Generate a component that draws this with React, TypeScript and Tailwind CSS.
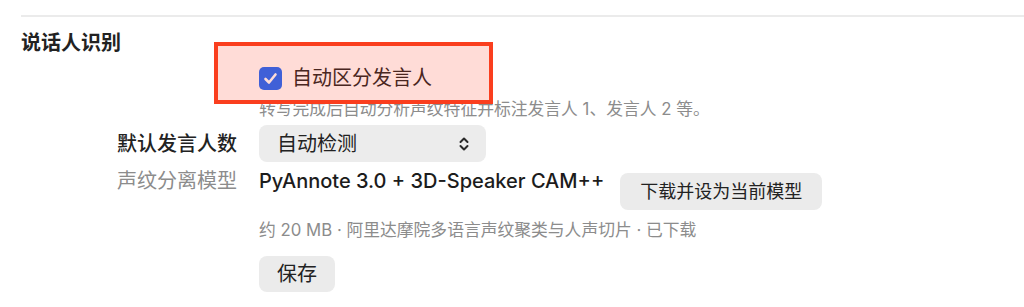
import React from 'react';

const font = { fontFamily: 'Inter, "Noto Sans CJK SC", sans-serif' };

const UpDown = () => (
  <svg width="12" height="16" viewBox="0 0 12 16" fill="none" stroke="#2a2a2a" strokeWidth="2" strokeLinecap="round" strokeLinejoin="round">
    <path d="M2.5 6 L6 2.5 L9.5 6" />
    <path d="M2.5 10 L6 13.5 L9.5 10" />
  </svg>
);

const Checkbox = () => (
  <svg width="23" height="23" viewBox="0 0 23 23">
    <rect x="0" y="0" width="23" height="23" rx="5" fill="#1668ff" />
    <path d="M6.5 12 L10 15.5 L16.5 7.5" fill="none" stroke="#fff" strokeWidth="2.6" strokeLinecap="round" strokeLinejoin="round" />
  </svg>
);

const Row = ({ label, gray, children, className = '' }: { label?: string; gray?: boolean; children: React.ReactNode; className?: string }) => (
  <div className={`flex ${className}`}>
    <div className={`w-[216px] shrink-0 text-right text-[20px] leading-[24px] ${gray ? 'text-[#8c8c8c]' : 'font-medium text-[#222]'}`}>
      {label}
    </div>
    <div className="ml-[22px] flex-1">{children}</div>
  </div>
);

const App = () => {
  return (
    <div className="relative w-[1024px] h-[307px] overflow-hidden bg-white pl-[21px]" style={font}>
      <div className="pt-[15px]">
        <div className="h-[2px] bg-[#ebebeb]" />
      </div>

      <h2 className="mt-[14px] text-[20px] leading-[24px] font-semibold text-[#222]">说话人识别</h2>

      <Row className="mt-[11px]">
        <div className="flex items-center gap-[10px] h-[24px]">
          <Checkbox />
          <span className="text-[20px] leading-[24px] text-[#222]">自动区分发言人</span>
        </div>
      </Row>

      <Row className="mt-[8px]">
        <p className="text-[16.8px] leading-[22px] text-[#8c8c8c]">转写完成后自动分析声纹特征并标注发言人 1、发言人 2 等。</p>
      </Row>

      <Row label="默认发言人数" className="mt-[5px] items-center">
        <div className="flex items-center justify-between w-[227px] h-[37px] rounded-lg bg-[#ececec] pl-[18px] pr-[16px]">
          <span className="text-[20px] leading-[24px] text-[#222]">自动检测</span>
          <UpDown />
        </div>
      </Row>

      <Row label="声纹分离模型" gray className="mt-[7px]">
        <div className="flex items-start gap-[16px]">
          <span className="text-[20px] leading-[24px] font-medium text-[#1c1c1c]">PyAnnote 3.0 + 3D-Speaker CAM++</span>
          <button className="mt-[4px] h-[37px] rounded-lg bg-[#ebebeb] px-[20px] text-[18px] text-[#222]">下载并设为当前模型</button>
        </div>
      </Row>

      <Row className="mt-[9px]">
        <p className="text-[16.8px] leading-[22px] text-[#8c8c8c]">约 20 MB · 阿里达摩院多语言声纹聚类与人声切片 · 已下载</p>
      </Row>

      <Row className="mt-[15px]">
        <button className="h-[36px] rounded-lg bg-[#ebebeb] px-[18px] text-[20px] text-[#222]">保存</button>
      </Row>

      <div className="pointer-events-none absolute left-[214px] top-[42px] w-[279px] h-[62px] border-4 border-[#fa3e1e] bg-[rgba(255,59,31,0.18)]" />
    </div>
  );
};

export default App;
